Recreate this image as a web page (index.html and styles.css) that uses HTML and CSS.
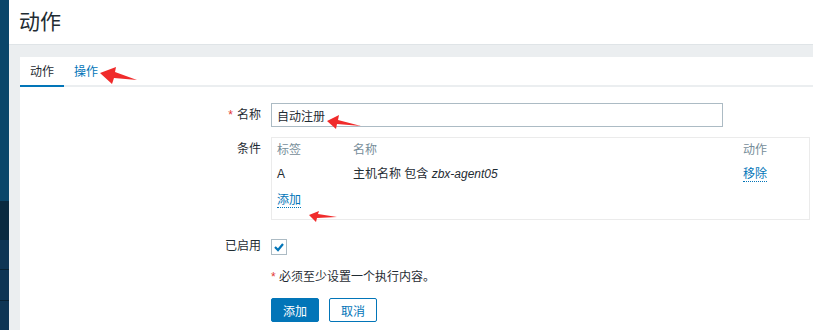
FILE: index.html
```html
<html>
    <head>
        <meta charset="utf-8">
        <link rel="stylesheet" href="styles.css">
    </head>
    <body>
        <div class="sidebar">
            <div class="navTop"></div>
            <div class="navDark"></div>
            <div class="navItem"></div>
            <div class="navItem"></div>
            <div class="navItem navLast"></div>
        </div>

        <div class="main">
            <div class="header">
                <h1>动作</h1>
            </div>

            <div class="wrapper">
                <div class="card">
                    <div class="tabs">
                        <span class="tab tabActive">动作</span>
                        <span class="tab">操作</span>
                    </div>

                    <div class="form">
                        <div class="formRow rowName">
                            <label class="formLabel required">名称</label>
                            <div class="formField">
                                <input class="textInput" type="text" value="自动注册">
                            </div>
                        </div>

                        <div class="formRow rowConditions">
                            <label class="formLabel">条件</label>
                            <div class="formField">
                                <div class="condBox">
                                    <div class="condRow condHead">
                                        <span>标签</span>
                                        <span>名称</span>
                                        <span>动作</span>
                                    </div>
                                    <div class="condRow">
                                        <span>A</span>
                                        <span>主机名称 包含 <em>zbx-agent05</em></span>
                                        <span><a class="link">移除</a></span>
                                    </div>
                                    <div class="condAdd">
                                        <a class="link">添加</a>
                                    </div>
                                </div>
                            </div>
                        </div>

                        <div class="formRow rowEnabled">
                            <label class="formLabel">已启用</label>
                            <div class="formField fieldCheck">
                                <span class="checkbox">
                                    <svg width="14" height="14" viewBox="0 0 14 14">
                                        <polyline points="3,7 6,10 11,4" fill="none" stroke="#0275b8" stroke-width="2.2"/>
                                    </svg>
                                </span>
                            </div>
                        </div>

                        <div class="formRow rowNote">
                            <span class="formLabel"></span>
                            <div class="formField"><span class="star">*</span> 必须至少设置一个执行内容。</div>
                        </div>

                        <div class="formRow rowButtons">
                            <span class="formLabel"></span>
                            <div class="formField buttons">
                                <button class="btn btnPrimary">添加</button>
                                <button class="btn btnAlt">取消</button>
                            </div>
                        </div>
                    </div>
                </div>
            </div>
        </div>

        <!-- annotation arrows drawn over the screenshot -->
        <svg class="arrows" width="813" height="330" viewBox="0 0 813 330">
            <polygon points="100,73 116,67 115,72 137,80 114,78 112,84" />
            <polygon points="327,121 339,115 338,120 361,126 337,124 336,129" />
            <polygon points="309,215 319,211 318,214 337,217 317,218 316,222" />
        </svg>
    </body>
</html>
```

FILE: styles.css
```css
body {
  margin: 0;
  display: flex;
  height: 330px;
  overflow: hidden;
  font-family: "Liberation Sans", "Noto Sans CJK SC", sans-serif;
  font-size: 12px;
  color: #1f2c33;
  position: relative;
}

/* left navigation strip */
.sidebar {
  width: 9px;
  display: flex;
  flex-direction: column;
  background: #0e3554;
}
.navTop { height: 206px; background: #0a466a; }
.navDark { height: 40px; background: #0a2a40; }
.navItem { height: 30px; border-bottom: 1px solid #072133; }
.navLast { border-bottom: none; }

.main {
  flex: 1;
  display: flex;
  flex-direction: column;
  background: #ebeef0;
}

.header {
  height: 44px;
  background: #ffffff;
  border-bottom: 1px solid #dfe4e7;
  padding-left: 10px;
}
.header h1 {
  margin: 0;
  font-size: 21px;
  font-weight: normal;
  line-height: 44px;
}

.wrapper {
  flex: 1;
  display: flex;
  padding: 12px 0 0 11px;
}
.card {
  flex: 1;
  background: #ffffff;
}

.tabs {
  display: flex;
  height: 28px;
  border-bottom: 2px solid #ebeef0;
}
.tab {
  height: 28px;
  padding: 0 10px;
  line-height: 31px;
  color: #0275b8;
}
.tabActive {
  color: #1f2c33;
  border-bottom: 2px solid #0275b8;
}

.form {
  padding-top: 16px;
}
.formRow {
  display: grid;
  grid-template-columns: 241px 1fr;
  column-gap: 10px;
}
.formLabel {
  text-align: right;
  line-height: 24px;
}
.required::before {
  content: "*";
  color: #e33734;
  margin-right: 4px;
}
.formField {
  line-height: 24px;
}

.rowConditions { margin-top: 10px; }
.rowEnabled { margin-top: 14px; }
.rowNote { margin-top: 6px; }
.rowButtons { margin-top: 9px; }

.textInput {
  box-sizing: border-box;
  width: 452px;
  height: 24px;
  border: 1px solid #acbbc4;
  padding: 0 5px;
  font-family: inherit;
  font-size: 12px;
  color: #1f2c33;
  outline: none;
}

.condBox {
  width: 539px;
  box-sizing: border-box;
  border: 1px solid #ebebeb;
  padding: 0 5px 7px;
}
.condRow {
  display: grid;
  grid-template-columns: 76px 1fr 61px;
  height: 24px;
  line-height: 24px;
}
.condHead {
  color: #768d99;
}
.condAdd {
  padding-top: 2px;
  line-height: 24px;
}
.link {
  color: #0275b8;
  border-bottom: 1px dotted #0275b8;
  cursor: pointer;
}

.fieldCheck {
  display: flex;
  align-items: center;
  height: 24px;
  padding-top: 1px;
}
.checkbox {
  display: flex;
  align-items: center;
  justify-content: center;
  box-sizing: border-box;
  width: 16px;
  height: 16px;
  border: 1px solid #acbbc4;
}

.star {
  color: #e33734;
}

.buttons {
  display: flex;
  gap: 10px;
}
.btn {
  box-sizing: border-box;
  width: 48px;
  height: 24px;
  border: 1px solid #0275b8;
  border-radius: 2px;
  font-family: inherit;
  font-size: 12px;
  padding: 0;
}
.btnPrimary {
  background: #0275b8;
  color: #ffffff;
}
.btnAlt {
  background: #ffffff;
  color: #0275b8;
}

.arrows {
  position: absolute;
  top: 0;
  left: 0;
  pointer-events: none;
}
.arrows polygon {
  fill: #f02b2b;
}
```
